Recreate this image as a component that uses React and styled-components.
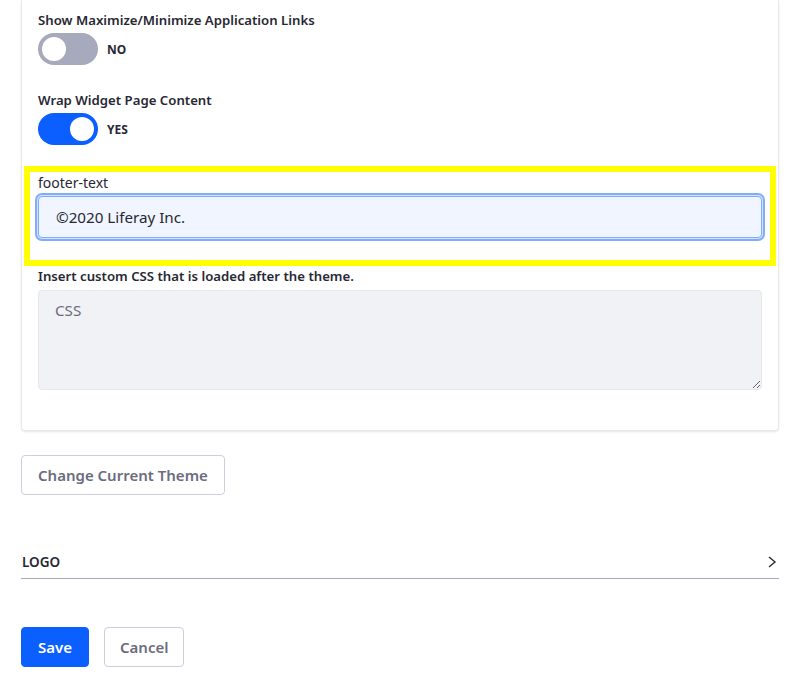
import React from "react";
import styled, { createGlobalStyle } from "styled-components";

const GlobalStyle = createGlobalStyle`
  body {
    margin: 0;
    background: #fff;
    font-family: "Noto Sans", "Open Sans", sans-serif;
    color: #272833;
  }
`;

const Page = styled.div`
  padding: 0 21px 24px;
`;

const Card = styled.div`
  background: #fff;
  border: 1px solid #e7e7ed;
  border-top: none;
  border-radius: 0 0 4px 4px;
  box-shadow: 0 1px 3px -1px rgba(0, 0, 0, 0.2);
  padding: 10px 16px 40px;
`;

const Group = styled.div`
  margin-bottom: ${({ $mb }) => $mb}px;
`;

const Label = styled.div`
  font-size: ${({ $light }) => ($light ? 14 : 13.2)}px;
  font-weight: ${({ $light }) => ($light ? 400 : 600)};
  line-height: 21px;
  margin-bottom: ${({ $mb }) => $mb ?? 2}px;
`;

const ToggleRow = styled.label`
  display: flex;
  align-items: center;
  gap: 9px;
`;

const Track = styled.span`
  position: relative;
  width: 60px;
  height: 32px;
  border-radius: 16px;
  background: ${({ $on }) => ($on ? "#0b5fff" : "#a7a9bc")};
  flex-shrink: 0;
`;

const Knob = styled.span`
  position: absolute;
  top: 4px;
  left: ${({ $on }) => ($on ? "32px" : "4px")};
  width: 24px;
  height: 24px;
  border-radius: 50%;
  background: #fff;
`;

const ToggleText = styled.span`
  font-size: 12px;
  font-weight: 700;
`;

const Highlight = styled.div`
  border: 6px solid #ffff00;
  margin: 0 -14px;
  padding: 0 8px 22px;
`;

const TextInput = styled.input`
  display: block;
  box-sizing: border-box;
  width: 100%;
  height: 42px;
  margin-top: 3px;
  padding: 0 17px;
  font-family: inherit;
  font-size: 15.2px;
  color: #272833;
  background: #f0f5ff;
  border: 1px solid #80acff;
  border-radius: 4px;
  box-shadow: 0 0 0 1px #d4e2ff, 0 0 0 3px #80acff;
  outline: none;
`;

const TextArea = styled.textarea`
  display: block;
  box-sizing: border-box;
  width: 100%;
  height: 100px;
  margin: 0;
  padding: 7px 16px;
  font-family: inherit;
  font-size: 15.2px;
  line-height: 24px;
  color: #272833;
  background: #f1f2f5;
  border: 1px solid #e7e7ed;
  border-radius: 4px;
  resize: vertical;
  outline: none;

  &::placeholder {
    color: #6b6c7e;
  }
`;

const Button = styled.button`
  box-sizing: border-box;
  height: 40px;
  padding: 0 ${({ $px }) => $px ?? 16}px;
  font-family: inherit;
  font-size: 15px;
  font-weight: 600;
  border-radius: 4px;
  cursor: pointer;
  color: ${({ $primary }) => ($primary ? "#fff" : "#6b6c7e")};
  background: ${({ $primary }) => ($primary ? "#0b5fff" : "#fff")};
  border: 1px solid ${({ $primary }) => ($primary ? "#0b5fff" : "#cdced9")};
`;

const ThemeButtonRow = styled.div`
  margin-top: 24px;
`;

const PanelHeader = styled.div`
  display: flex;
  align-items: center;
  justify-content: space-between;
  margin-top: 40px;
  padding: 17px 0 5px 1px;
  border-bottom: 1px solid #a7a9bc;
  font-size: 13.5px;
  font-weight: 600;
  line-height: 21px;
  text-transform: uppercase;
`;

const Chevron = styled.svg`
  width: 10px;
  height: 12px;
  margin-right: 2px;
  margin-top: -2px;
`;

const Actions = styled.div`
  display: flex;
  gap: 15px;
  margin-top: 48px;
`;

const Toggle = ({ on, label }) => (
  <ToggleRow>
    <Track $on={on}>
      <Knob $on={on} />
    </Track>
    <ToggleText>{label}</ToggleText>
  </ToggleRow>
);

export default function App() {
  return (
    <>
      <GlobalStyle />
      <Page>
        <Card>
          <Group $mb={25}>
            <Label>Show Maximize/Minimize Application Links</Label>
            <Toggle on={false} label="NO" />
          </Group>
          <Group $mb={21}>
            <Label>Wrap Widget Page Content</Label>
            <Toggle on label="YES" />
          </Group>
          <Highlight>
            <Label $light>footer-text</Label>
            <TextInput defaultValue="©2020 Liferay Inc." />
          </Highlight>
          <Group $mb={0}>
            <Label $mb={3}>Insert custom CSS that is loaded after the theme.</Label>
            <TextArea placeholder="CSS" />
          </Group>
        </Card>
        <ThemeButtonRow>
          <Button>Change Current Theme</Button>
        </ThemeButtonRow>
        <PanelHeader>
          <span>Logo</span>
          <Chevron viewBox="0 0 10 12">
            <polyline points="2,1 8,6 2,11" fill="none" stroke="#272833" strokeWidth="1.4" />
          </Chevron>
        </PanelHeader>
        <Actions>
          <Button $primary>Save</Button>
          <Button $px={15}>Cancel</Button>
        </Actions>
      </Page>
    </>
  );
}
